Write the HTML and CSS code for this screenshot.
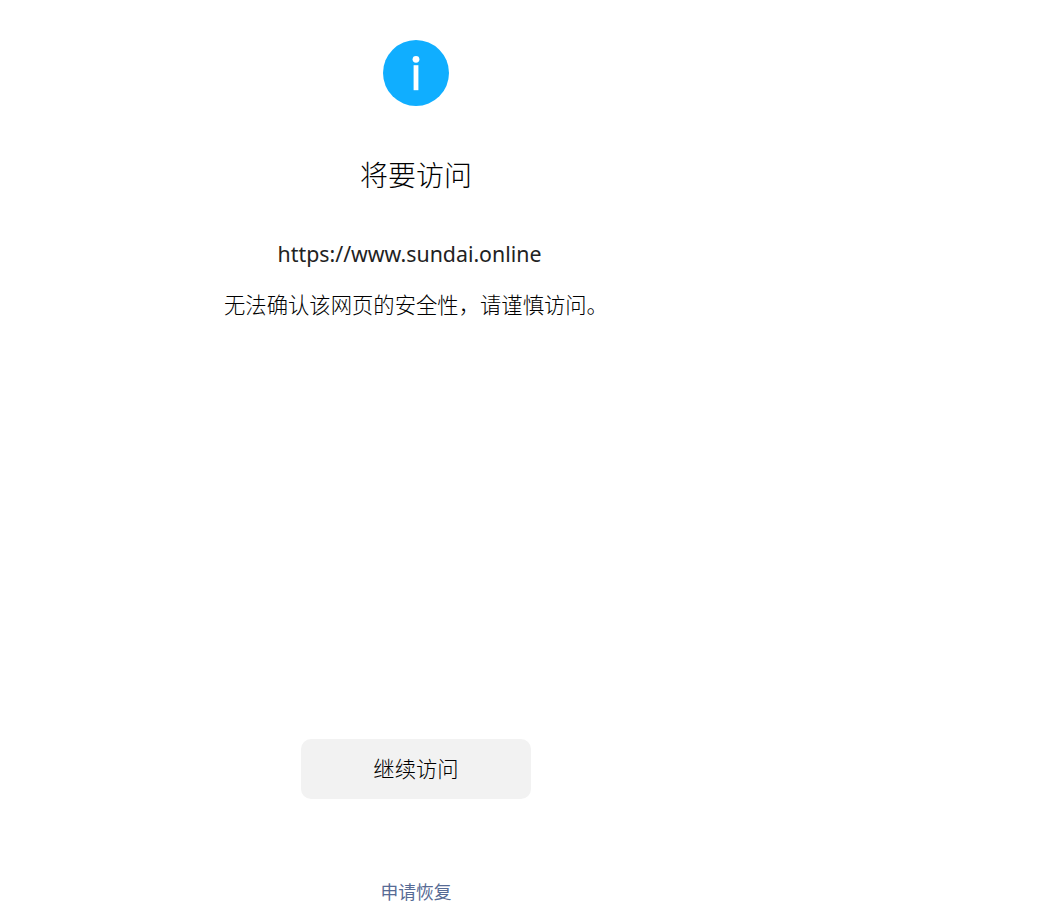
FILE: index.html
```html
<!DOCTYPE html>
<html lang="zh-CN">
  <head>
    <meta charset="UTF-8" />
    <meta name="viewport" content="width=device-width, initial-scale=1.0" />
    <title>将要访问</title>
    <link rel="stylesheet" href="styles.css">
  </head>
  <body>
    <div class="container">
      <svg class="icono" viewBox="0 0 66 66" aria-hidden="true">
        <circle cx="33" cy="33" r="33" fill="#10aeff" />
        <circle cx="33" cy="19.3" r="3.4" fill="#fff" />
        <rect x="30.6" y="25.2" width="4.8" height="25" fill="#fff" />
      </svg>

      <h1>将要访问</h1>
      <p class="url">https://www.sundai.online</p>
      <p class="aviso">无法确认该网页的安全性，请谨慎访问。</p>

      <button type="button" class="boton">继续访问</button>
      <a class="enlace" href="#">申请恢复</a>
    </div>
  </body>
</html>
```
FILE: styles.css
```css
html,
body {
  margin: 0;
  height: 100%;
}

body {
  font-family: "Noto Sans", "Noto Sans CJK SC", sans-serif;
  font-weight: 300;
  background-color: white;
  color: #000;
}

.container {
  width: 832px;
  height: 911px;
  box-sizing: border-box;
  padding-top: 40px;
  display: flex;
  flex-direction: column;
  align-items: center;
  text-align: center;
}

.icono {
  display: block;
  width: 66px;
  height: 66px;
  flex: none;
}

h1 {
  margin: 49px 0 0;
  font-size: 28px;
  font-weight: 300;
  line-height: 40px;
  color: #000;
}

.url {
  margin: 44px 0 0;
  padding-right: 13px;
  font-size: 21.33px;
  font-weight: 400;
  line-height: 30px;
  color: #222;
}

.aviso {
  margin: 21px 0 0;
  font-size: 21.33px;
  line-height: 30px;
}

.boton {
  margin-top: auto;
  width: 230px;
  height: 60px;
  flex: none;
  padding: 0 0 4px;
  border: none;
  border-radius: 10px;
  background-color: #f2f2f2;
  color: #000;
  font-family: inherit;
  font-weight: 300;
  font-size: 21.33px;
  cursor: pointer;
}

.enlace {
  margin: 79px 0 5px;
  font-size: 17.8px;
  font-weight: 400;
  line-height: 28px;
  color: #576b95;
  text-decoration: none;
}
```
